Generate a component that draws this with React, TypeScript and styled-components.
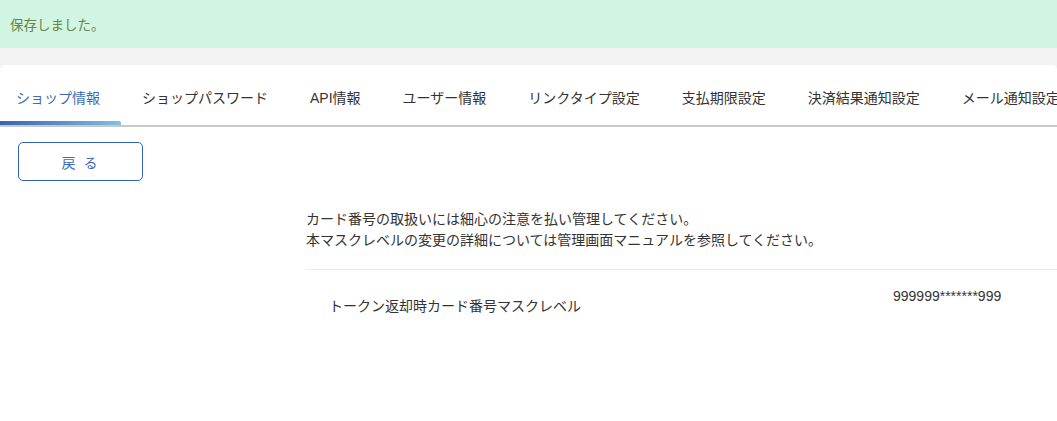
import React from "react";
import styled, { createGlobalStyle } from "styled-components";

const GlobalStyle = createGlobalStyle`
  html, body {
    margin: 0;
    padding: 0;
    background: #f3f3f3;
    overflow: hidden;
  }
  body {
    font-family: "Liberation Sans", "Noto Sans CJK JP", sans-serif;
    color: #333333;
  }
`;

const Page = styled.div`
  width: 1057px;
  height: 421px;
  display: flex;
  flex-direction: column;
`;

const Notice = styled.div`
  height: 48px;
  background: #d0f5e3;
  color: #6b8440;
  font-size: 13.5px;
  display: flex;
  align-items: center;
  padding-left: 10px;
  flex-shrink: 0;
`;

const Panel = styled.div`
  margin-top: 17px;
  flex: 1;
  background: #ffffff;
  border-radius: 5px 5px 0 0;
  display: flex;
  flex-direction: column;
`;

const TabList = styled.div`
  display: flex;
  white-space: nowrap;
  border-bottom: 2px solid #c8c8c8;
  overflow: hidden;
`;

const Tab = styled.div<{ $active?: boolean }>`
  position: relative;
  height: 56px;
  padding: 4px 20.5px 0 21.5px;
  display: flex;
  align-items: center;
  font-size: 14px;
  color: ${({ $active }) => ($active ? "#3d6ab8" : "#333333")};
  flex-shrink: 0;

  &:first-child {
    padding-left: 16px;
  }

  &::after {
    content: "";
    display: ${({ $active }) => ($active ? "block" : "none")};
    position: absolute;
    left: 0;
    right: 0;
    bottom: 0;
    height: 4px;
    border-radius: 0 2px 0 0;
    background: linear-gradient(90deg, #3564b6 0%, #5c90c8 50%, #7fc0df 100%);
  }
`;

const Body = styled.div`
  padding: 15px 0 0 18px;
  display: flex;
  flex-direction: column;
`;

const BackButton = styled.button`
  width: 125px;
  height: 39px;
  border: 1px solid #3265b6;
  border-radius: 5px;
  background: #ffffff;
  color: #3d6ab8;
  font-family: inherit;
  font-size: 14px;
  letter-spacing: 2px;
  cursor: pointer;
`;

const Content = styled.div`
  margin-left: 288px;
  margin-top: 28px;
`;

const Note = styled.p`
  margin: 0;
  font-size: 14px;
  line-height: 21px;
`;

const Divider = styled.div`
  margin-top: 18px;
  border-top: 1px solid #e1eefa;
  margin-right: -20px;
`;

const SettingRow = styled.div`
  display: grid;
  grid-template-columns: 564px 1fr;
  font-size: 14px;
`;

const Label = styled.div`
  padding: 26px 23px 0;
  line-height: 20px;
`;

const Value = styled.div`
  padding: 16px 23px 0;
  line-height: 20px;
`;

const tabs = [
  "ショップ情報",
  "ショップパスワード",
  "API情報",
  "ユーザー情報",
  "リンクタイプ設定",
  "支払期限設定",
  "決済結果通知設定",
  "メール通知設定",
];

export default function App() {
  return (
    <Page>
      <GlobalStyle />
      <Notice>保存しました。</Notice>
      <Panel>
        <TabList>
          {tabs.map((t, i) => (
            <Tab key={t} $active={i === 0}>
              {t}
            </Tab>
          ))}
        </TabList>
        <Body>
          <BackButton>戻 る</BackButton>
          <Content>
            <Note>カード番号の取扱いには細心の注意を払い管理してください。</Note>
            <Note>本マスクレベルの変更の詳細については管理画面マニュアルを参照してください。</Note>
            <Divider />
            <SettingRow>
              <Label>トークン返却時カード番号マスクレベル</Label>
              <Value>999999*******999</Value>
            </SettingRow>
          </Content>
        </Body>
      </Panel>
    </Page>
  );
}
